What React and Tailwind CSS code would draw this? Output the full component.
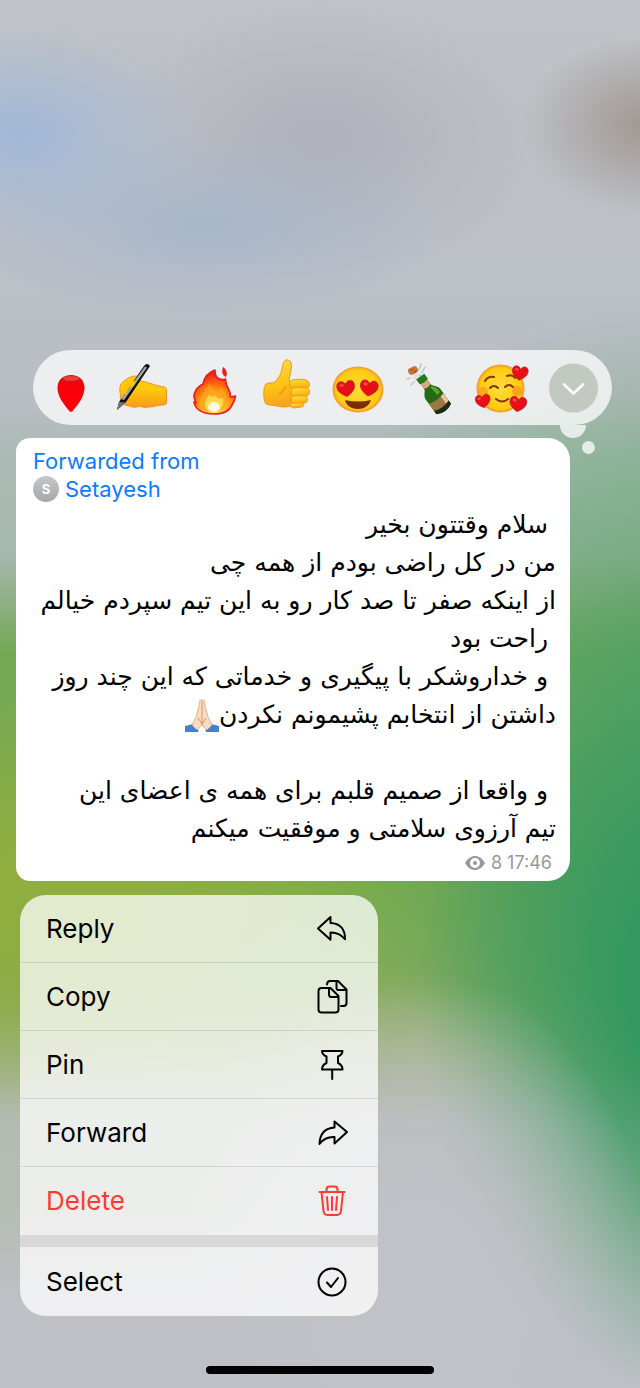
const BACKDROP =
  'bg-[radial-gradient(180px_110px_at_20px_135px,#a1b8d8ff,#a1b8d800),radial-gradient(130px_90px_at_650px_125px,#a09691ff,#a0969100),radial-gradient(240px_90px_at_200px_225px,#a8b7cb,#a8b7cb00),radial-gradient(220px_140px_at_320px_140px,#aeb1b9,#aeb1b900),radial-gradient(240px_340px_at_420px_1310px,#c1c1c8_30%,#b4bac000),radial-gradient(270px_420px_at_690px_980px,#35995f_25%,#3f9a6400),radial-gradient(330px_200px_at_690px_900px,#44996680,#3f9a6400),radial-gradient(420px_420px_at_690px_720px,#5da467,#5da46700),radial-gradient(330px_200px_at_60px_900px,#8fae3f_20%,#8dae3a00),linear-gradient(#bfc2c6_0,#bcc0c7_20%,#b8bcc3_29%,#a9bbb4_33%,#a5b8ae_40%,#74a854_47%,#7dac4a_64%,#85ab5c_71%,#a0b282_76%,#b3bbb2_81%,#b6bdb5_88%,#bfc0c6_94%,#bfc0c7)]';

function Balloon() {
  return (
    <svg viewBox="0 0 56 56" className="size-14" aria-hidden="true">
      <defs>
        <linearGradient id="balloon" x1="0" y1="0" x2="0" y2="1">
          <stop offset="0" stopColor="#c0181c" />
          <stop offset=".3" stopColor="#fb0008" />
        </linearGradient>
      </defs>
      <path d="M28 15C20 15 14.500 20 14.500 28c0 9 7 17 12 23.200q1.500 1.300 3 0C34.500 45 41.500 37 41.500 28 41.500 20 36 15 28 15Z" fill="url(#balloon)" />
      <ellipse cx="28" cy="18.500" rx="8" ry="2.500" fill="#f0605c" opacity=".6" />
    </svg>
  );
}

function WritingHand() {
  return (
    <svg viewBox="0 0 56 56" className="size-14" aria-hidden="true">
      <defs>
        <linearGradient id="hand" x1="0" y1="0" x2="0" y2="1">
          <stop offset=".4" stopColor="#ffcb0a" />
          <stop offset="1" stopColor="#f99a1c" />
        </linearGradient>
      </defs>
      <path d="M5 27C5 22 15 16 20 16c4 0 3 4 6 5 8 1 14 5 24 6q1.500 1 1.500 4v11q0 2.500-2 3c-8 0-10 2-15 2-4 1-7 0-10-.5-4 1-8 1-10-.5-4 0-7-2-8-5q-2-3-1-6-1-3-.5-8Z" fill="url(#hand)" stroke="#f0932b" strokeWidth="1" />
      <path d="M8 32c4 1 8-1 9-5" fill="none" stroke="#ef9412" strokeWidth="1.500" />
      <path d="M2 50 4 42 29 6q3-4 6 0L11 42Z" fill="#101010" />
      <path d="M6 39 30 6.500l2 1L9 40Z" fill="#a8a8a8" />
      <path d="m2 50 2-8 7 .5Z" fill="#707070" />
      <path d="M6 29c5-5 10-8 14-8 1 4-3 6-6 7l-4 7Z" fill="#ffc30a" />
    </svg>
  );
}

function Fire() {
  return (
    <svg viewBox="0 0 56 56" className="size-14" aria-hidden="true">
      <defs>
        <radialGradient id="flame" cx=".5" cy=".85" r=".75">
          <stop offset="0" stopColor="#fff1bd" />
          <stop offset=".25" stopColor="#ffc638" />
          <stop offset=".6" stopColor="#ff850c" />
          <stop offset="1" stopColor="#f52319" />
        </radialGradient>
      </defs>
      <path d="M28 10C19 13 17 19 16 24 11 26 7 31 7 37l2 6-2-1c1 7 8 12 20 12 10 0 16-4 18-9 2-3 3-5 3.500-9l-5 1c0-6-2-8-4-12q-1-3-1-6c-7 2-11-2-10.500-9Z" fill="url(#flame)" stroke="#ec1c1c" strokeWidth="1.700" strokeLinejoin="round" />
      <path d="M13 44c-1-5 1-8 4-12 1-3 3-5 6-8 1 4 4 6 7 9q3-2 4-5c5 5 7 10 4 18-4 8-21 8-25-2Z" fill="#ffa41b" opacity=".8" />
      <path d="M18 45c-1-4 1-6 3-8l1-3c2 3 4 4 6 1 2 3 4 5 8 3 1 6-1 13-9 15-5 0-8-3-9-8Z" fill="#ffd84a" />
      <ellipse cx="27" cy="47" rx="6" ry="5" fill="#fff8dc" />
      <path d="M36 7c3 2 5 6 3 10-3-1-5-5-3-10Z" fill="#ef1c20" />
    </svg>
  );
}

function ThumbsUp() {
  return (
    <svg viewBox="0 0 56 56" className="size-14 overflow-visible" aria-hidden="true">
      <defs>
        <linearGradient id="thumb" x1="0" y1="0" x2=".2" y2="1">
          <stop offset="0" stopColor="#ffdc4c" />
          <stop offset=".6" stopColor="#fdc414" />
          <stop offset="1" stopColor="#f8a51c" />
        </linearGradient>
      </defs>
      <g fill="url(#thumb)" stroke="#ed9625" strokeWidth="1" strokeLinejoin="round">
        <path d="M7 24c3-2 7 0 10-3 3-4 5-7 6-12 1-4 1-8 4-9 6-1 6 6 5 10l-2 10 8 6v16c-3 5-13 6-20 4-3-1-8-.5-11-2-3-4-3-17 0-20Z" />
        <path d="M33 20c5-1 11-1 14 0 5 2 4 8 0 9H35c-5 0-6-7-2-9Z" />
        <path d="M34 28c4-1 12 0 14 0 4 2 3 7 0 8l-12 1c-5-1-5-7-2-9Z" />
        <path d="M34 36c4-1 10 0 12 0 4 2 3 6 0 7l-10 1c-4-1-5-6-2-8Z" />
        <path d="M33 43h9c4 1 3 4 0 4l-8 1c-3-1-3-4-1-5Z" />
      </g>
      <path d="M20 35c2-4 6-4 7-9" fill="none" stroke="#ee9b13" strokeWidth="1.500" />
    </svg>
  );
}

function Heart({ x, y, size, turn = 0 }) {
  return (
    <g transform={`translate(${x} ${y}) rotate(${turn}) scale(${size / 20})`}>
      <path d="M0 9C-7 5-11 1-9.500-5-8-9.500-2-9.500 0-4.500 2-9.500 8-9.500 9.500-5 11 1 7 5 0 9Z" fill="#e60f17" stroke="#c80b18" strokeWidth=".8" />
      <ellipse cx="-4.500" cy="-4" rx="2.500" ry="1.700" fill="#ff5c50" opacity=".7" />
    </g>
  );
}

function FaceFill({ id }) {
  return (
    <defs>
      <radialGradient id={id} cx=".5" cy=".5" r=".5">
        <stop offset="0" stopColor="#ffdc3c" />
        <stop offset=".85" stopColor="#ffcb12" />
        <stop offset="1" stopColor="#f2952b" />
      </radialGradient>
    </defs>
  );
}

function HeartEyes() {
  return (
    <svg viewBox="0 0 56 56" className="size-14" aria-hidden="true">
      <FaceFill id="heart-eyes" />
      <ellipse cx="28" cy="29.500" rx="25.500" ry="23" fill="url(#heart-eyes)" />
      <Heart x={16} y={28.5} size={18} turn={-8} />
      <Heart x={39} y={28} size={18} turn={8} />
      <path d="M15 40q13 3 26 0c-2 6-7 9-13 9s-12-3-13-9Z" fill="#7b2e08" />
    </svg>
  );
}

function Bottle() {
  return (
    <svg viewBox="0 0 56 56" className="size-14" aria-hidden="true">
      <path d="m17 10 2-6M20 13l3-6M8 18l-3 1M12 22l-3 3M17 15l5 2" stroke="#bfc8c8" strokeWidth="1.500" strokeLinecap="round" />
      <path d="m11 12 8 5-3 5-5-4Z" fill="#dde1e0" />
      <g transform="translate(11 10.500) rotate(-28)">
        <rect x="-5" y="-3.500" width="10" height="7" rx="3" fill="#c77637" />
        <path d="M-2-1h3M0 2h3" stroke="#894816" />
      </g>
      <g transform="translate(20 19) rotate(-36)">
        <path d="M-4-2h8v11c0 3 5 5 5 10v18q-9 5-18 0V19c0-5 5-7 5-10Z" fill="#246b14" />
        <path d="M-4 3h8v6q-4 2-8 0Z" fill="#d8a77e" />
        <path d="M-5-3h10v6q-5 2-10 0Z" fill="#217c18" />
        <path d="M2 11c3 1 5 4 5 10l-4 1Z" fill="#60a531" />
        <path d="M-9 24q8 3 18 0v9q-8 3-18 0Z" fill="#9b7844" />
        <path d="M5 25q2 0 4-1v9l-4 1Z" fill="#e8c59a" />
        <path d="M-9 33q9 4 18 0v4q-9 5-18 0Z" fill="#22291c" />
      </g>
    </svg>
  );
}

function SmilingHearts() {
  return (
    <svg viewBox="0 0 56 56" className="size-14" aria-hidden="true">
      <FaceFill id="smiling" />
      <circle cx="26.500" cy="28.500" r="24" fill="url(#smiling)" />
      <circle cx="9" cy="32" r="5" fill="#fb8b22" opacity=".55" />
      <circle cx="43" cy="31" r="5" fill="#fb8b22" opacity=".65" />
      <path d="M11 21q3-5 9-4M33 16q5-2 8 2M16 28q4-4 8 0M31 27q4-4 8 0M22 39q6 5 12 0" fill="none" stroke="#83360c" strokeWidth="2" strokeLinecap="round" />
      <Heart x={46} y={13} size={16} turn={8} />
      <Heart x={9} y={41} size={15} turn={-10} />
      <Heart x={44} y={44} size={17} turn={8} />
    </svg>
  );
}

function PrayingHands() {
  return (
    <svg viewBox="0 0 34 34" className="inline-block size-[34px] align-middle" role="img" aria-label="🙏🏻">
      <path d="M0 27 8 25l5 8H0ZM34 27l-8-2-5 8h13Z" fill="#4084cf" />
      <path d="m8 25 5 7M26 25l-5 7" stroke="#285c9e" strokeWidth="1.500" />
      <path d="M17 1c-3-1-3 3-3 6l-3 11-4 8 5 5 5-5 5 5 5-5-4-8-3-11c0-3 0-7-3-6Z" fill="#fbdcc0" stroke="#d9a27d" strokeWidth=".8" strokeLinejoin="round" />
      <path d="M17 2v24M13 19l4 6 4-6" fill="none" stroke="#d8946a" strokeWidth="1" />
    </svg>
  );
}

function Icon({ children }) {
  return (
    <svg viewBox="0 0 36 36" className="size-9" fill="none" stroke="currentColor" strokeWidth="2" strokeLinecap="round" strokeLinejoin="round" aria-hidden="true">
      {children}
    </svg>
  );
}

const REACTIONS = [
  ['Balloon', Balloon],
  ['Writing hand', WritingHand],
  ['Fire', Fire],
  ['Thumbs up', ThumbsUp],
  ['Heart eyes', HeartEyes],
  ['Champagne', Bottle],
  ['Smiling with hearts', SmilingHearts],
];

const ACTIONS = [
  ['Reply', <path key="i" d="M15.500 6 3 17.500l12.500 11.200v-7.200c6-.2 10 1.500 14.500 6.700.2-10-5-15.800-14.500-16.200Z" />],
  ['Copy', <g key="i"><path d="M7.500 9h8l8 8v13.500q0 3-3 3H6.500q-3 0-3-3V12q0-3 3-3Z" /><path d="M14 9.500v6q0 2.500 2.500 2.500h6.500M12 5.500q0-3.500 3-3.500h8l8.500 8.500V24q0 3-3 3h-2.500M21.500 2.500V9q0 2 2 2H31" /></g>],
  ['Pin', <path key="i" d="M7 4h20.500q0 3.500-4.500 5.500v6.500q4.500 2 4.500 6.500H7q0-4.500 4.500-6.500V9.500Q7 7.500 7 4ZM17.200 22.500v9.500" />],
  ['Forward', <path key="i" d="M19.500 6.500v6C10 13 5 18 4.500 29c4-5.500 9-7.300 15-7v6.500L32 17Z" />],
  ['Delete', <path key="i" d="M4.500 9h25M6.500 9l2 19q.5 4 4 4h9q4 0 4.500-4l2-19M11.500 9V6.500q0-3 3-3h5q3 0 3 3V9M12 14l1 13M17 14v13M22 14l-1 13" />],
];

const ROW = 'flex w-full items-center justify-between pr-[27px] pl-[26px] text-left text-[26px] leading-8';

const LINES = [
  ' سلام وقتتون بخیر',
  'من در کل راضی بودم از همه چی',
  'از اینکه صفر تا صد کار رو به این تیم سپردم خیالم',
  ' راحت بود',
  ' و خداروشکر با پیگیری و خدماتی که این چند روز',
  'داشتن از انتخابم پشیمونم نکردن',
  '',
  ' و واقعا از صمیم قلبم برای همه ی اعضای این',
  'تیم آرزوی سلامتی و موفقیت میکنم',
];

export default function App() {
  return (
    <main className={`flex min-h-screen flex-col pt-[350px] pb-[14px] font-['Inter','Liberation_Sans',sans-serif] ${BACKDROP}`}>
      <section aria-label="Reactions" className="relative mr-7 ml-[33px] flex h-[75px] items-center justify-between rounded-full bg-white/75 px-[10px]">
        {REACTIONS.map(([name, Emoji]) => (
          <button key={name} type="button" aria-label={name} className="size-14">
            <Emoji />
          </button>
        ))}
        <button type="button" aria-label="More reactions" className="flex size-14 items-center justify-center">
          <svg viewBox="0 0 50 50" className="size-[50px]" aria-hidden="true">
            <circle cx="24.500" cy="25" r="24.500" fill="#c2c9c1" />
            <path d="m15 21.500 9.500 9 9.500-9" fill="none" stroke="#fff" strokeWidth="2.600" strokeLinecap="round" strokeLinejoin="round" />
          </svg>
        </button>
        <span className="absolute top-full right-[26px] h-[13px] w-[26px] rounded-b-full bg-white/75" />
        <span className="absolute top-[91px] right-[17px] size-[13px] rounded-full bg-white/75" />
      </section>

      <article className="mt-[13px] mr-[70px] ml-4 rounded-[22px] rounded-tl-[14px] rounded-bl-[14px] bg-white pt-[9px] pr-[14px] pb-[6px] pl-[17px]">
        <header className="text-[22px] leading-7 text-[#0a7cff]">
          <p>Forwarded from</p>
          <p className="flex items-center gap-[6px]">
            <span className="flex size-[26px] items-center justify-center rounded-full bg-linear-to-b from-[#c4c6c8] to-[#a5a7aa] text-[13px] font-bold text-white">S</span>
            <a href="#setayesh">Setayesh</a>
          </p>
        </header>
        <div dir="rtl" lang="fa" className="mt-[3px] font-['DejaVu_Sans',sans-serif] text-[25px] leading-[38px] whitespace-pre text-black">
          {LINES.map((line, i) => (
            <p key={i} className="h-[38px]">
              {line}
              {i === 5 && <PrayingHands />}
            </p>
          ))}
        </div>
        <footer className="mt-[3px] flex items-center justify-end gap-[6px] pr-1 text-[18px] leading-6 text-[#98989b]">
          <svg viewBox="0 0 20 14" className="h-[14px] w-5" aria-label="Views">
            <path fillRule="evenodd" d="M0 7C3 2 6.500 0 10 0s7 2 10 7c-3 5-6.500 7-10 7S3 12 0 7Zm10-5a5 5 0 1 0 0 10 5 5 0 0 0 0-10Z" fill="currentColor" />
            <circle cx="10" cy="7" r="2" fill="currentColor" />
          </svg>
          <span>8 17:46</span>
        </footer>
      </article>

      <nav aria-label="Message actions" className="mt-[14px] ml-5 w-[358px] overflow-hidden rounded-[26px] text-black">
        {ACTIONS.map(([name, icon]) => (
          <button
            key={name}
            type="button"
            className={`${ROW} bg-white/75 ${name === 'Delete' ? 'h-[68px] text-[#ff3b30]' : 'h-[68px] border-b border-black/10'}`}
          >
            {name}
            <Icon>{icon}</Icon>
          </button>
        ))}
        <div className="h-3 bg-[#d8d8d8]" />
        <button type="button" className={`${ROW} h-[69px] bg-white/75`}>
          Select
          <Icon>
            <circle cx="17" cy="18" r="13.500" />
            <path d="m12 18.500 4 4.500 7-9" />
          </Icon>
        </button>
      </nav>

      <div className="mx-auto mt-auto h-2 w-[228px] rounded-full bg-black" />
    </main>
  );
}
